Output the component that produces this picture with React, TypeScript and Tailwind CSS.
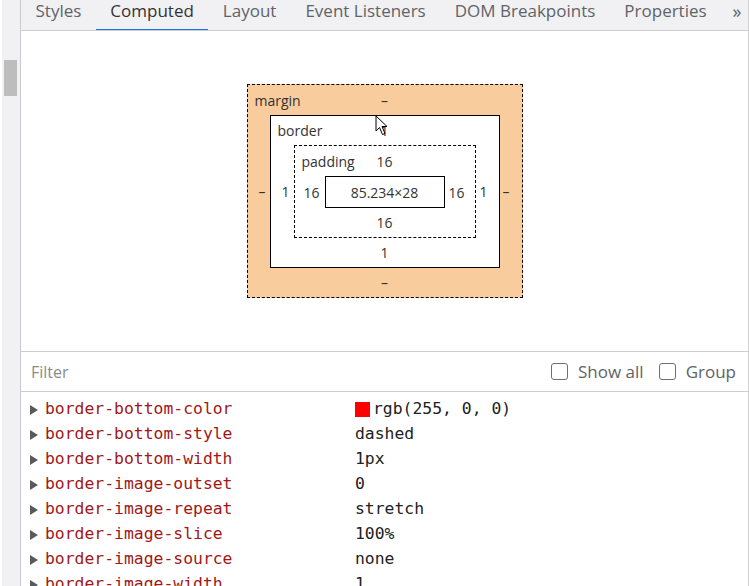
import React from "react";

const tabs = ["Styles", "Computed", "Layout", "Event Listeners", "DOM Breakpoints", "Properties"];

const props: { name: string; value: string; swatch?: string }[] = [
  { name: "border-bottom-color", value: "rgb(255, 0, 0)", swatch: "#ff0000" },
  { name: "border-bottom-style", value: "dashed" },
  { name: "border-bottom-width", value: "1px" },
  { name: "border-image-outset", value: "0" },
  { name: "border-image-repeat", value: "stretch" },
  { name: "border-image-slice", value: "100%" },
  { name: "border-image-source", value: "none" },
  { name: "border-image-width", value: "1" },
];

const sans = "font-['Open_Sans','Noto_Sans',sans-serif]";

function Checkbox({ label }: { label: string }) {
  return (
    <div className="flex items-center gap-[10px]">
      <div className="w-[17px] h-[17px] rounded-[3px] border-[1.5px] border-[#6f6f6f] bg-white" />
      <span className="text-[17px] text-[#5f6368]">{label}</span>
    </div>
  );
}

function Cursor() {
  return (
    <svg className="absolute left-[375px] top-[115px]" width="14" height="22" viewBox="0 0 14 22">
      <path
        d="M1 1 L1 16 L4.5 12.5 L7.5 19.5 L10 18.5 L7 11.5 L12 11.5 Z"
        fill="white"
        stroke="black"
        strokeWidth="1"
        strokeLinejoin="round"
      />
    </svg>
  );
}

function BoxModel() {
  return (
    <div className="h-[320px] shrink-0 flex items-center justify-center text-[14px] text-[#333]">
      {/* margin */}
      <div className="w-[276px] border border-dashed border-black bg-[#f9cc9d] flex flex-col">
        <div className="relative h-[30px] flex items-center justify-center">
          <span className="absolute left-[7px]">margin</span>
          <span>–</span>
        </div>
        <div className="flex">
          <div className="w-[22px] flex items-center justify-end pr-1">–</div>
          {/* border */}
          <div className="w-[230px] border border-black bg-white flex flex-col">
            <div className="relative h-[29px] flex items-center justify-center">
              <span className="absolute left-[7px]">border</span>
              <span>1</span>
            </div>
            <div className="flex">
              <div className="w-[23px] flex items-center justify-end pr-1">1</div>
              {/* padding */}
              <div className="w-[182px] border border-dashed border-black flex flex-col">
                <div className="relative h-[30px] flex items-center justify-center">
                  <span className="absolute left-[7px]">padding</span>
                  <span>16</span>
                </div>
                <div className="flex">
                  <div className="w-[30px] flex items-center justify-end pr-[5px]">16</div>
                  <div className="w-[120px] h-[32px] border border-black flex items-center justify-center">
                    85.234×28
                  </div>
                  <div className="w-[30px] flex items-center justify-start pl-1">16</div>
                </div>
                <div className="h-[29px] flex items-center justify-center">16</div>
              </div>
              <div className="w-[23px] flex items-center justify-start pl-1">1</div>
            </div>
            <div className="h-[29px] flex items-center justify-center">1</div>
          </div>
          <div className="w-[22px] flex items-center justify-start pl-[3px]">–</div>
        </div>
        <div className="h-[29px] flex items-center justify-center">–</div>
      </div>
    </div>
  );
}

export default function App() {
  return (
    <div className={`relative w-[749px] h-[586px] overflow-hidden bg-white ${sans}`}>
      <div className="flex h-full">
        {/* left scrollbar strip */}
        <div className="w-[21px] shrink-0 h-full bg-[#f1f1f3] border-l-2 border-white border-r border-r-[#c9cbcf] relative">
          <div className="absolute left-[2px] top-[60px] w-[13px] h-[36px] bg-[#bdbdbd]" />
        </div>

        <div className="flex-1 min-w-0 flex flex-col border-r border-[#d0d0d0]">
          {/* tab bar */}
          <div className="relative h-[31px] shrink-0 bg-[#f1f1f3] border-b border-[#cacdd1] flex items-stretch overflow-hidden">
            {tabs.map((t) => (
              <div
                key={t}
                className={`relative shrink-0 whitespace-nowrap px-[14.5px] flex items-center text-[17px] leading-none pb-[9px] ${
                  t === "Computed" ? "text-[#333]" : "text-[#5f6368]"
                }`}
              >
                {t}
                {t === "Computed" && (
                  <div className="absolute left-0 right-0 bottom-[-1px] h-[2px] bg-[#1a73e8]" />
                )}
              </div>
            ))}
            <div className="absolute right-0 top-0 h-[30px] w-[22px] bg-[#f1f1f3] flex items-center justify-center pb-[9px] text-[18px] text-[#5f6368] leading-none">
              »
            </div>
          </div>

          <BoxModel />

          {/* filter bar */}
          <div className="h-[41px] shrink-0 border-t border-b border-[#cacdd1] flex items-center pl-[10px] pr-[12px]">
            <span className="text-[16px] text-[#8a8a8a]">Filter</span>
            <div className="ml-auto flex items-center gap-[15px]">
              <Checkbox label="Show all" />
              <Checkbox label="Group" />
            </div>
          </div>

          {/* computed property list */}
          <div className="pt-[5px] font-['DejaVu_Sans_Mono','Liberation_Mono',monospace] text-[16.4px]">
            {props.map((p) => (
              <div key={p.name} className="h-[25px] flex items-center">
                <div className="w-[24px] flex justify-end pr-[7px]">
                  <svg width="8" height="10" viewBox="0 0 8 10">
                    <path d="M0 0 L8 5 L0 10 Z" fill="#5a5a5a" />
                  </svg>
                </div>
                <span className="w-[310px] text-[#a01818] whitespace-nowrap">{p.name}</span>
                <span className="flex items-center text-[#222] whitespace-nowrap">
                  {p.swatch && (
                    <span className="inline-block w-[15px] h-[15px] mr-[3px] bg-[#ff0000]" />
                  )}
                  {p.value}
                </span>
              </div>
            ))}
          </div>
        </div>
      </div>
      <Cursor />
    </div>
  );
}
